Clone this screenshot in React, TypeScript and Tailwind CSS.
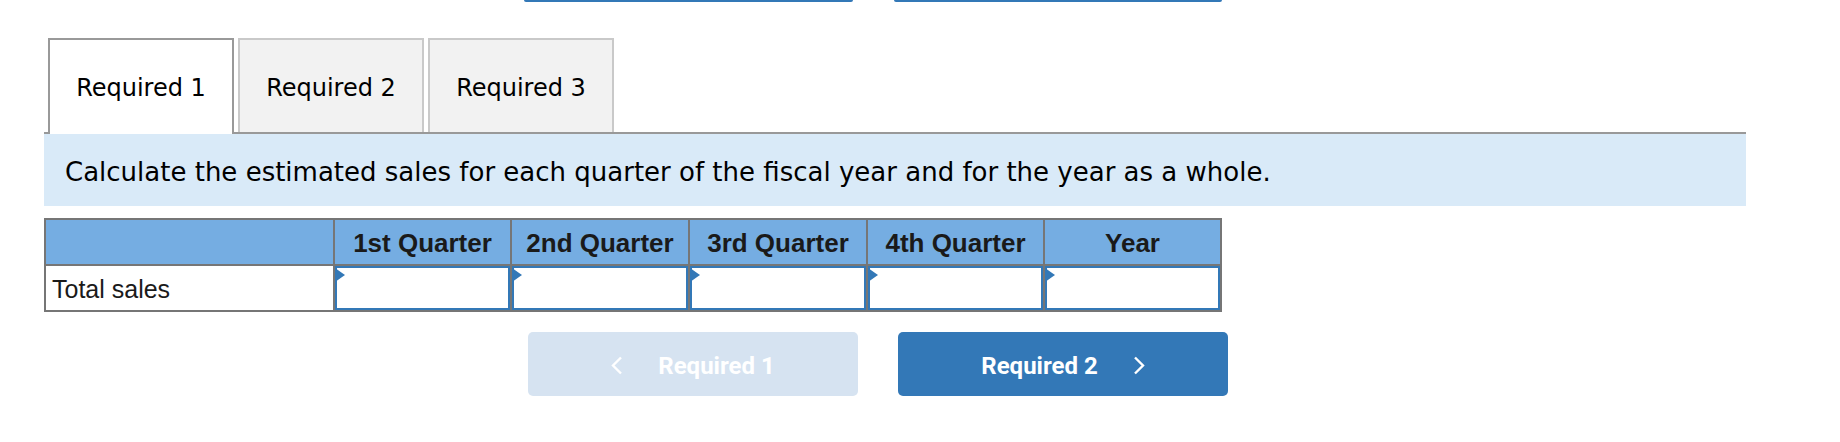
import React from 'react'

const TABS = ['Required 1', 'Required 2', 'Required 3']
const COLS = ['1st Quarter', '2nd Quarter', '3rd Quarter', '4th Quarter', 'Year']
const COL_W = ['w-[177px]', 'w-[178px]', 'w-[178px]', 'w-[177px]', 'w-[177px]']

function Chevron({ dir }: { dir: 'left' | 'right' }) {
  return (
    <svg width="12" height="19" viewBox="0 0 12 19" fill="none" className="shrink-0">
      {dir === 'left' ? (
        <polyline points="10,1.5 2,9.5 10,17.5" stroke="white" strokeWidth="2.4" />
      ) : (
        <polyline points="2,1.5 10,9.5 2,17.5" stroke="white" strokeWidth="2.4" />
      )}
    </svg>
  )
}

function CellInput() {
  return (
    <div className="relative h-full w-full border-2 border-[#3378b7] bg-white">
      {/* little flag in the corner */}
      <svg width="10" height="14" viewBox="0 0 10 14" className="absolute -left-[2px] top-0">
        <polygon points="0,0 10,7 0,14" fill="#3378b7" />
      </svg>
    </div>
  )
}

export default function App() {
  return (
    <div className="h-[442px] w-[1840px] overflow-hidden bg-white">
      {/* bottom edge of the nav buttons from the part above */}
      <div className="flex h-[2px] gap-[41px] pl-[524px]">
        <div className="h-[2px] w-[329px] rounded-b-[3px] bg-[#3378b7]" />
        <div className="h-[2px] w-[328px] rounded-b-[3px] bg-[#3378b7]" />
      </div>

      <div className="ml-[44px] mt-[36px] w-[1702px]">
        {/* Tabs */}
        <div className="flex items-end gap-[4px] border-b-2 border-[#999999] pl-[4px]">
          {TABS.map((tab, i) =>
            i === 0 ? (
              <div
                key={tab}
                className="-mb-[2px] flex h-[96px] w-[186px] items-center justify-center border-2 border-b-0 border-[#999999] bg-white pt-[2px] text-[24px] text-black [font-family:'DejaVu_Sans',Verdana,sans-serif]"
              >
                {tab}
              </div>
            ) : (
              <div
                key={tab}
                className="flex h-[94px] w-[186px] items-center justify-center border-2 border-b-0 border-[#c9c9c9] bg-[#f2f2f2] pt-[4px] text-[24px] text-black [font-family:'DejaVu_Sans',Verdana,sans-serif]"
              >
                {tab}
              </div>
            )
          )}
        </div>

        {/* Instruction */}
        <div className="flex h-[72px] items-center bg-[#d9eaf8] pl-[21px] pt-[4px] text-[26px] text-black [font-family:'DejaVu_Sans',Verdana,sans-serif]">
          Calculate the estimated sales for each quarter of the fiscal year and for the year as a whole.
        </div>

        {/* Table */}
        <div className="mt-[12px] w-[1178px] border-2 border-[#767676] [font-family:'Liberation_Sans',Arial,sans-serif]">
          <div className="flex h-[44px] bg-[#75ade2]">
            <div className="w-[287px]" />
            {COLS.map((c, i) => (
              <div
                key={c}
                className={`${COL_W[i]} flex items-center justify-center border-l-2 border-[#767676] pt-[3px] text-[26px] font-bold text-[#1a1a1a]`}
              >
                {c}
              </div>
            ))}
          </div>
          <div className="flex h-[46px] border-t-2 border-[#767676]">
            <div className="flex w-[287px] items-center pl-[6px] pt-[4px] text-[25px] text-[#1a1a1a]">Total sales</div>
            {COLS.map((c, i) => (
              <div key={c} className={`${COL_W[i]} border-l-2 border-[#767676]`}>
                <CellInput />
              </div>
            ))}
          </div>
        </div>

        {/* Prev / next */}
        <div className="ml-[484px] mt-[20px] flex gap-[40px] [font-family:Roboto,'Liberation_Sans',sans-serif]">
          <button className="flex h-[64px] w-[330px] items-center justify-center gap-[35px] rounded-[5px] bg-[#d6e3f1] pt-[3px] text-[24px] font-bold text-white">
            <Chevron dir="left" />
            <span>Required 1</span>
          </button>
          <button className="flex h-[64px] w-[330px] items-center justify-center gap-[35px] rounded-[5px] bg-[#3378b7] pt-[3px] text-[24px] font-bold text-white">
            <span>Required 2</span>
            <Chevron dir="right" />
          </button>
        </div>
      </div>
    </div>
  )
}
